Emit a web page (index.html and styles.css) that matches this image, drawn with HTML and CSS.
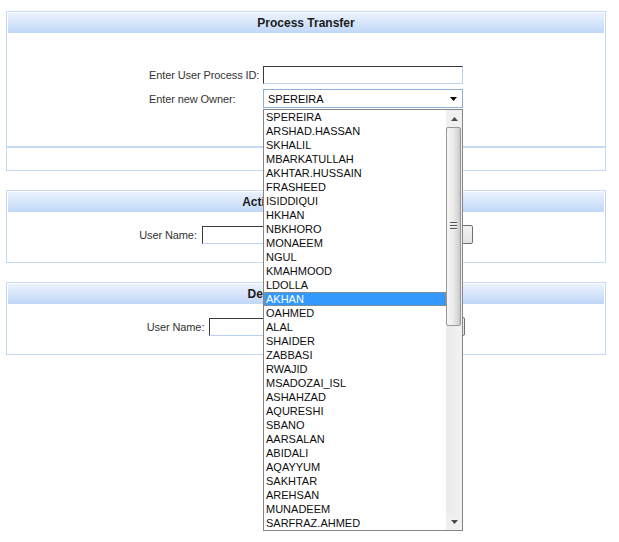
FILE: index.html
```html
<!DOCTYPE html>
<html>
<head>
<meta charset="utf-8">
<title>Process Transfer</title>
<link rel="stylesheet" href="styles.css">
</head>
<body>
<div class="page">
  <section class="panel">
    <div class="panel-head">Process Transfer</div>
    <div class="panel-body transfer-body">
      <div class="form-grid">
        <div class="label">Enter User Process ID:</div>
        <div class="text-in wide"></div>
        <div class="label">Enter new Owner:</div>
        <div class="select-wrap">
          <div class="select">
            <span class="select-val">SPEREIRA</span>
            <svg class="select-arrow" width="7" height="4" viewBox="0 0 7 4"><path d="M0 0H7L3.5 4Z" fill="#000"/></svg>
          </div>
          <div class="listbox">
            <div class="options">
              <div class="opt">SPEREIRA</div>
              <div class="opt">ARSHAD.HASSAN</div>
              <div class="opt">SKHALIL</div>
              <div class="opt">MBARKATULLAH</div>
              <div class="opt">AKHTAR.HUSSAIN</div>
              <div class="opt">FRASHEED</div>
              <div class="opt">ISIDDIQUI</div>
              <div class="opt">HKHAN</div>
              <div class="opt">NBKHORO</div>
              <div class="opt">MONAEEM</div>
              <div class="opt">NGUL</div>
              <div class="opt">KMAHMOOD</div>
              <div class="opt">LDOLLA</div>
              <div class="opt selected">AKHAN</div>
              <div class="opt">OAHMED</div>
              <div class="opt">ALAL</div>
              <div class="opt">SHAIDER</div>
              <div class="opt">ZABBASI</div>
              <div class="opt">RWAJID</div>
              <div class="opt">MSADOZAI_ISL</div>
              <div class="opt">ASHAHZAD</div>
              <div class="opt">AQURESHI</div>
              <div class="opt">SBANO</div>
              <div class="opt">AARSALAN</div>
              <div class="opt">ABIDALI</div>
              <div class="opt">AQAYYUM</div>
              <div class="opt">SAKHTAR</div>
              <div class="opt">AREHSAN</div>
              <div class="opt">MUNADEEM</div>
              <div class="opt">SARFRAZ.AHMED</div>
            </div>
            <div class="scrollbar">
              <div class="sb-btn">
                <svg width="7" height="4" viewBox="0 0 7 4"><path d="M3.5 0L7 4H0Z" fill="#4a4a4a"/></svg>
              </div>
              <div class="sb-thumb">
                <div class="grip"><i></i><i></i><i></i></div>
              </div>
              <div class="sb-track"></div>
              <div class="sb-btn">
                <svg width="7" height="4" viewBox="0 0 7 4"><path d="M0 0H7L3.5 4Z" fill="#4a4a4a"/></svg>
              </div>
            </div>
          </div>
        </div>
      </div>
    </div>
    <div class="panel-foot"><div class="btn transfer-btn"></div></div>
  </section>

  <section class="panel">
    <div class="panel-head">Activate User Account</div>
    <div class="panel-body user-body">
      <div class="user-row">
        <div class="label">User Name:</div>
        <div class="text-in user-in"></div>
        <div class="btn act-btn"></div>
      </div>
    </div>
  </section>

  <section class="panel">
    <div class="panel-head">Delete User Account</div>
    <div class="panel-body user-body">
      <div class="user-row">
        <div class="label">User Name:</div>
        <div class="text-in user-in"></div>
        <div class="btn del-btn"></div>
      </div>
    </div>
  </section>
</div>
</body>
</html>
```

FILE: styles.css
```css
html, body {
  margin: 0;
  padding: 0;
  background: #ffffff;
}

body {
  min-height: 542px;
  font-family: "Liberation Sans", Arial, sans-serif;
  font-size: 11px;
  color: #333333;
}

.page {
  padding: 11px 0 0 6px;
  width: 600px;
  min-height: 531px;
  display: flex;
  flex-direction: column;
  gap: 19px;
}

.panel {
  border: 1px solid #c3d9f7;
  padding: 1px 1px 0 1px;
  background: #ffffff;
}

.panel-head {
  height: 20px;
  line-height: 20px;
  text-align: center;
  font-weight: bold;
  font-size: 12px;
  color: #1c1c1c;
  background: linear-gradient(to bottom, #ebf2fd 0%, #d6e5fb 50%, #c0d7f8 100%);
}

.transfer-body {
  height: 113px;
  padding-top: 33px;
  box-sizing: border-box;
}

.form-grid {
  display: grid;
  grid-template-columns: 114px 200px;
  grid-template-rows: 18px 19px;
  row-gap: 5px;
  justify-content: center;
  align-items: center;
}

.label {
  color: #333333;
  white-space: nowrap;
  letter-spacing: -0.1px;
}

.text-in {
  box-sizing: border-box;
  height: 18px;
  border-style: solid;
  border-width: 1px;
  border-color: #3a3a3a #b9d0ee #b9d0ee #3a3a3a;
  background: #ffffff;
}

.wide {
  width: 200px;
}

.select-wrap {
  position: relative;
  width: 200px;
  height: 19px;
}

.select {
  box-sizing: border-box;
  height: 19px;
  border: 1px solid #8fb0d6;
  background: #ffffff;
  display: flex;
  align-items: center;
  justify-content: space-between;
  padding: 0 5px 0 4px;
  color: #000000;
}

.select-arrow {
  display: block;
}

.listbox {
  position: absolute;
  left: 0;
  top: 20px;
  z-index: 10;
  width: 200px;
  box-sizing: border-box;
  border: 1px solid #858585;
  background: #ffffff;
  display: flex;
}

.options {
  width: 182px;
}

.opt {
  height: 14px;
  line-height: 14px;
  padding-left: 2px;
  color: #0d0d0d;
  white-space: nowrap;
}

.opt.selected {
  background: #3399ff;
  color: #ffffff;
  outline: 1px dotted #c8843a;
  outline-offset: -1px;
}

.scrollbar {
  width: 16px;
  background: #f0f0f0;
  display: flex;
  flex-direction: column;
}

.sb-btn {
  height: 17px;
  display: flex;
  align-items: center;
  justify-content: center;
  background: #f0f0f0;
}

.sb-btn svg {
  display: block;
}

.sb-thumb {
  height: 199px;
  box-sizing: border-box;
  margin-right: 1px;
  border: 1px solid #989898;
  border-radius: 2px;
  background: linear-gradient(to right, #f5f5f5 0%, #ececec 45%, #dcdcdc 75%, #c9c9c9 100%);
  display: flex;
  align-items: center;
  justify-content: center;
}

.grip {
  display: flex;
  flex-direction: column;
  gap: 1px;
  margin-top: -1px;
}

.grip i {
  display: block;
  width: 7px;
  height: 1px;
  background: #555555;
  border-bottom: 1px solid #f4f4f4;
}

.sb-track {
  flex: 1;
  background: linear-gradient(to right, #eaeaea 0%, #f2f2f2 100%);
}

.panel-foot {
  height: 22px;
  margin: 0 -1px;
  border-top: 2px solid #c3d9f7;
  display: flex;
  align-items: center;
  justify-content: center;
}

.btn {
  box-sizing: border-box;
  height: 19px;
  border: 1px solid #707070;
  border-radius: 2px;
  background: linear-gradient(to bottom, #f4f4f4, #e2e2e2);
}

.transfer-btn {
  width: 70px;
}

.user-body {
  height: 50px;
  box-sizing: border-box;
  padding-top: 13px;
}

.user-row {
  display: flex;
  align-items: center;
  justify-content: center;
}

.user-row .label {
  margin-right: 5px;
}

.user-in {
  width: 200px;
  margin-right: 3px;
}

.act-btn {
  width: 68px;
}

.del-btn {
  width: 53px;
}
```
